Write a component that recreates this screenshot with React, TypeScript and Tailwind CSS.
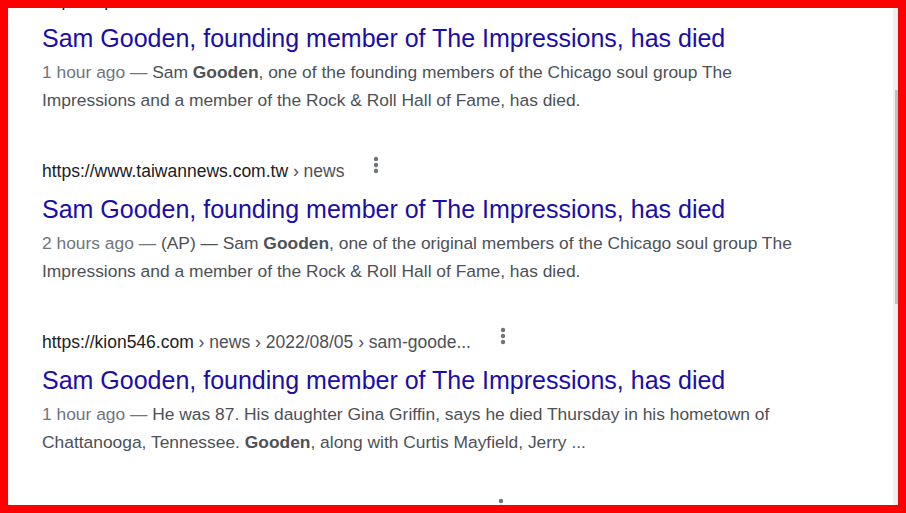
import React from "react";

type Part = { text: string; bold?: boolean };

interface Result {
  site: string;
  crumbs: string;
  title: string;
  age: string;
  lines: Part[][];
}

const results: Result[] = [
  {
    site: "https://apnews.com",
    crumbs: " › article › entertainment-music-obituaries",
    title: "Sam Gooden, founding member of The Impressions, has died",
    age: "1 hour ago",
    lines: [
      [
        { text: "Sam " },
        { text: "Gooden", bold: true },
        { text: ", one of the founding members of the Chicago soul group The" },
      ],
      [{ text: "Impressions and a member of the Rock & Roll Hall of Fame, has died." }],
    ],
  },
  {
    site: "https://www.taiwannews.com.tw",
    crumbs: " › news",
    title: "Sam Gooden, founding member of The Impressions, has died",
    age: "2 hours ago",
    lines: [
      [
        { text: "(AP) — Sam " },
        { text: "Gooden", bold: true },
        { text: ", one of the original members of the Chicago soul group The" },
      ],
      [{ text: "Impressions and a member of the Rock & Roll Hall of Fame, has died." }],
    ],
  },
  {
    site: "https://kion546.com",
    crumbs: " › news › 2022/08/05 › sam-goode...",
    title: "Sam Gooden, founding member of The Impressions, has died",
    age: "1 hour ago",
    lines: [
      [
        {
          text: "He was 87. His daughter Gina Griffin, says he died Thursday in his hometown of",
        },
      ],
      [
        { text: "Chattanooga, Tennessee. " },
        { text: "Gooden", bold: true },
        { text: ", along with Curtis Mayfield, Jerry ..." },
      ],
    ],
  },
  {
    site: "https://www.wrcbtv.com",
    crumbs: " › story › 2022/08/05 › sam-go...",
    title: "Sam Gooden, founding member of The Impressions, has died",
    age: "1 hour ago",
    lines: [[{ text: "" }], [{ text: "" }]],
  },
];

function Dots() {
  return (
    <svg width="6" height="18" viewBox="0 0 6 18" className="ml-[29px] -mt-[12px] shrink-0">
      <circle cx="3" cy="3" r="2.2" fill="#70757a" />
      <circle cx="3" cy="9" r="2.2" fill="#70757a" />
      <circle cx="3" cy="15" r="2.2" fill="#70757a" />
    </svg>
  );
}

function ResultBlock({ r }: { r: Result }) {
  return (
    <div className="flex flex-col mb-[43px]">
      <div className="flex items-center h-[28px] text-[17.5px] leading-[28px]">
        <span className="text-[#202124]">{r.site}</span>
        <span className="text-[#4d5156] whitespace-pre">{r.crumbs}</span>
        <Dots />
      </div>
      <div className="mt-[8px] text-[25px] leading-[32px] text-[#1a0dab] whitespace-nowrap">
        {r.title}
      </div>
      <div className="mt-[4px] text-[17.4px] leading-[28px] text-[#4d5156]">
        {r.lines.map((line, i) => (
          <div key={i} className="h-[28px] whitespace-nowrap">
            {i === 0 && <span className="text-[#70757a]">{r.age} — </span>}
            {line.map((p, j) =>
              p.bold ? (
                <b key={j} className="font-bold">
                  {p.text}
                </b>
              ) : (
                <span key={j}>{p.text}</span>
              )
            )}
          </div>
        ))}
      </div>
    </div>
  );
}

export default function App() {
  return (
    <div
      className="w-[906px] h-[513px] bg-[#ff0000] p-[8px] flex overflow-hidden"
      style={{ fontFamily: '"Liberation Sans", Arial, sans-serif' }}
    >
      <div className="flex-1 h-[497px] bg-white overflow-hidden">
        <div className="flex flex-col pl-[34px] -mt-[22px]">
          {results.map((r, i) => (
            <ResultBlock key={i} r={r} />
          ))}
        </div>
      </div>
      <div className="w-[5px] h-[497px] bg-[#f0f0f0] flex flex-col">
        <div className="ml-[2px] mt-[82px] h-[214px] w-[3px] bg-[#c1c1c1]" />
      </div>
    </div>
  );
}
